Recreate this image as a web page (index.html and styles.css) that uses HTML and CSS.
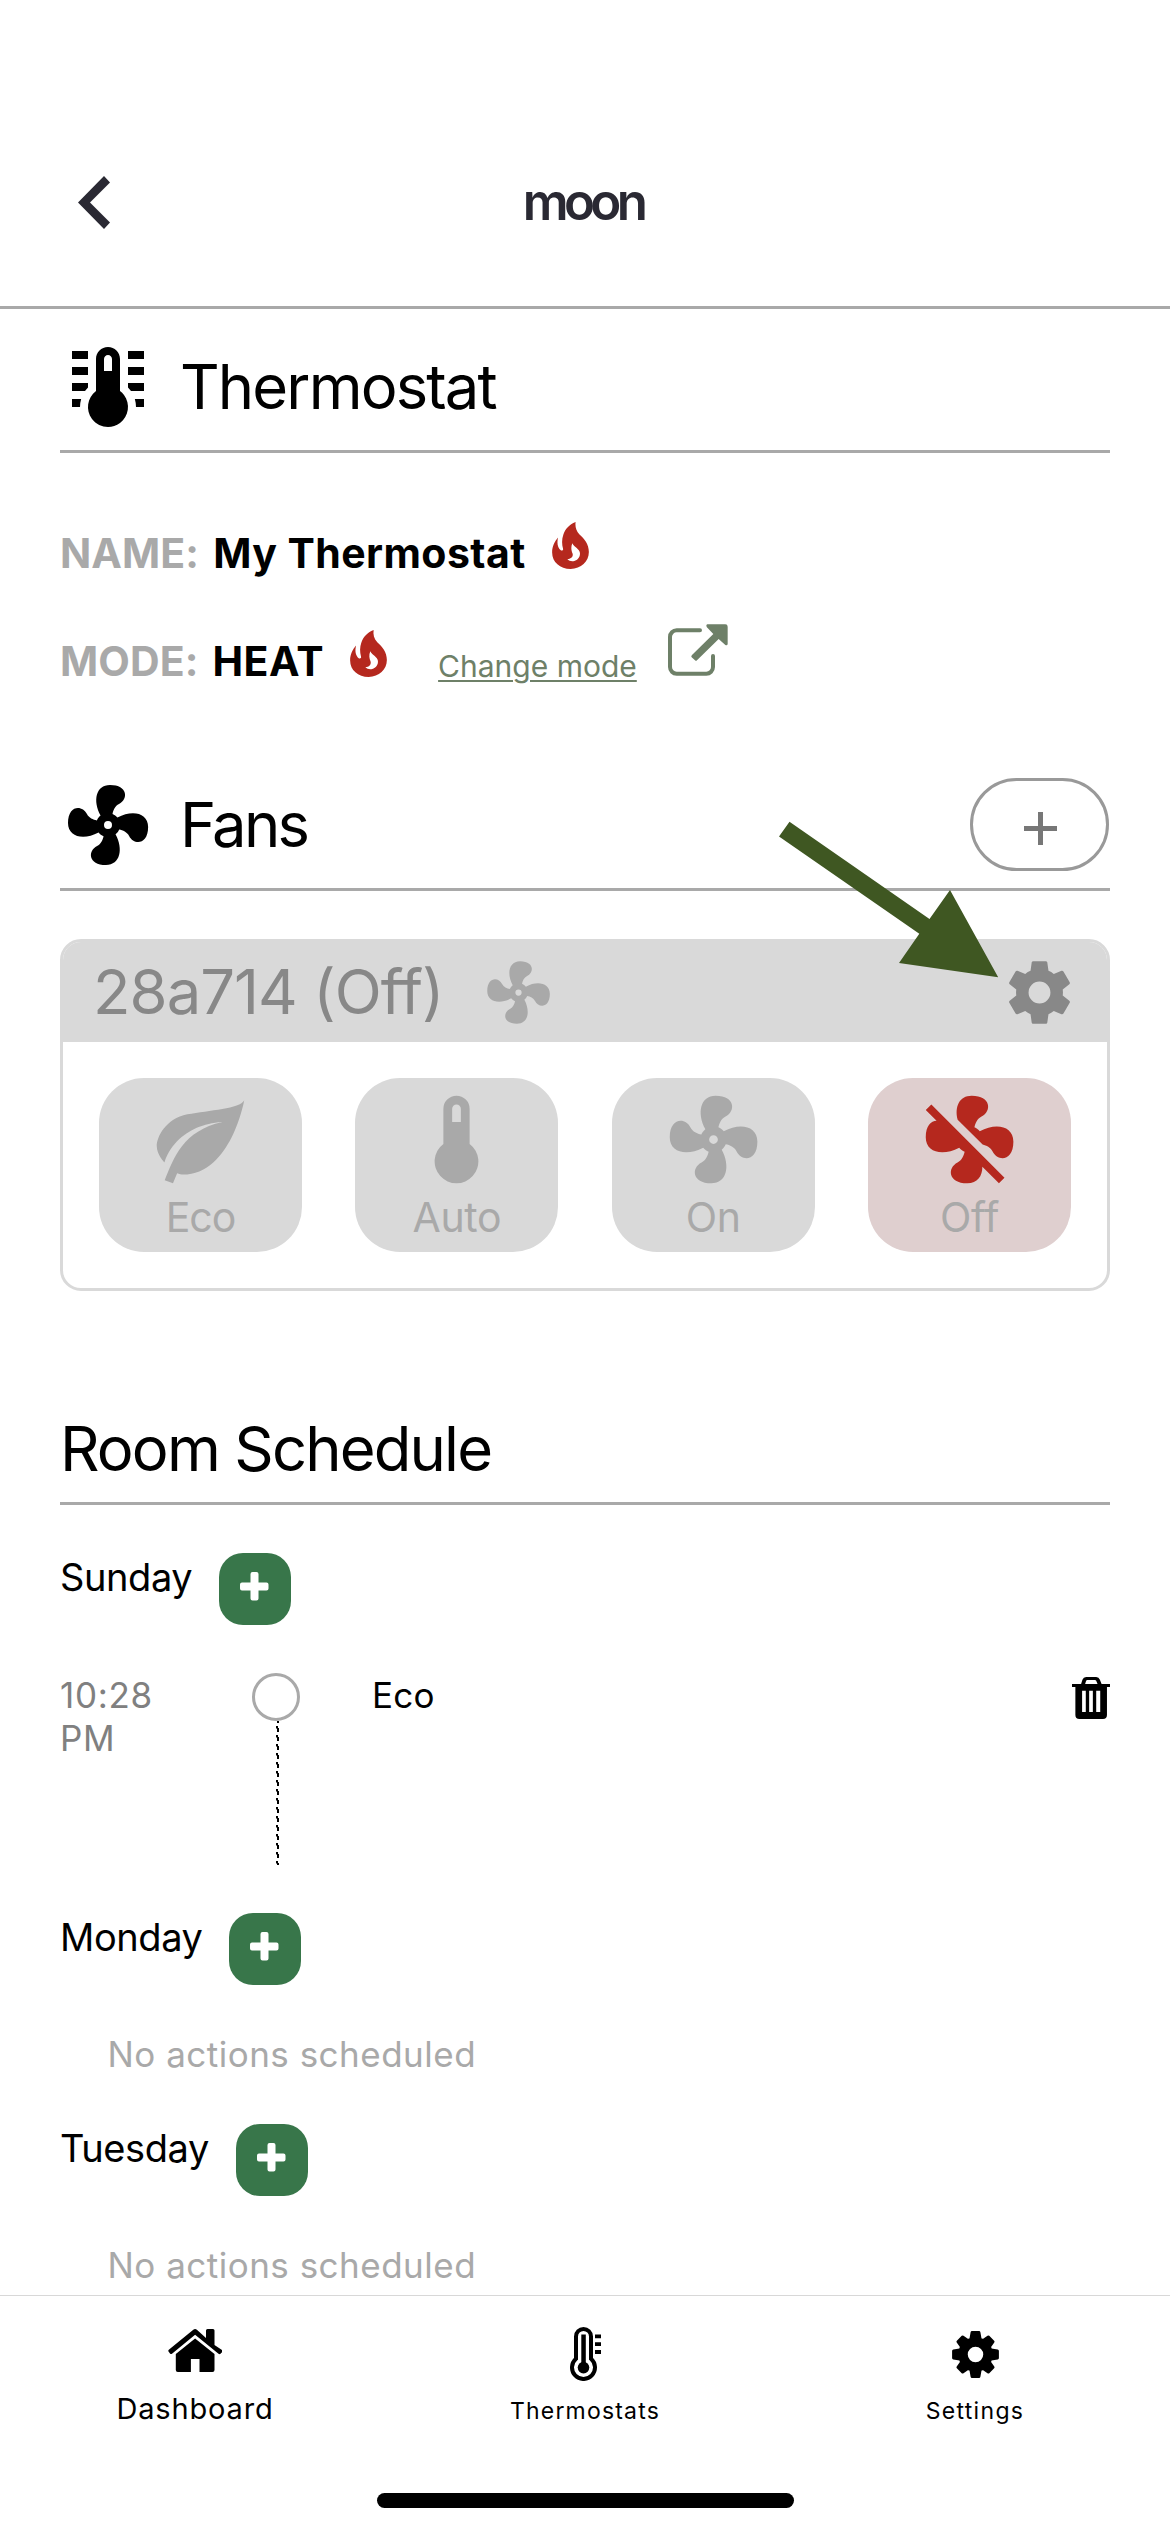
FILE: index.html
```
<!DOCTYPE html>
<html lang="en">
<head>
<meta charset="utf-8">
<title>moon</title>
<link rel="stylesheet" href="styles.css">
</head>
<body>
<svg class="defs" aria-hidden="true">
  <symbol id="fan" viewBox="0 0 24 24"><path d="M12,11A1,1 0 0,0 11,12A1,1 0 0,0 12,13A1,1 0 0,0 13,12A1,1 0 0,0 12,11M12.5,2C17,2 17.11,5.57 14.75,6.75C13.76,7.24 13.32,8.29 13.13,9.22C13.61,9.42 14.03,9.73 14.35,10.13C18.05,8.13 22.03,8.92 22.03,12.5C22.03,17 18.46,17.1 17.28,14.73C16.78,13.74 15.72,13.3 14.79,13.11C14.59,13.59 14.28,14 13.88,14.34C15.87,18.03 15.08,22 11.5,22C7,22 6.91,18.42 9.27,17.24C10.25,16.75 10.69,15.71 10.89,14.79C10.4,14.59 9.97,14.27 9.65,13.87C5.96,15.85 2,15.07 2,11.5C2,7 5.56,6.89 6.74,9.26C7.24,10.25 8.29,10.68 9.22,10.87C9.41,10.39 9.73,9.97 10.14,9.65C8.15,5.96 8.94,2 12.5,2Z"/></symbol>
  <symbol id="flame" viewBox="33 44 111 142"><path fill-rule="evenodd" d="M104 44C102 58 105 70 115 81C130 95 144 110 144 135C144 164 120 186 89 186C57 186 33 165 33 136C33 117 41 103 51 91C47 106 49 123 60 130C64 131 67 129 66 125C62 110 62 96 67 82C73 65 84 52 104 44ZM94 108C89 120 91 130 95 140C97 149 90 156 79 156C84 162 92 164 100 162C111 159 118 149 117 138C116 124 100 121 94 108Z"/></symbol>
  <symbol id="plus" viewBox="0 0 29 29"><path d="M12.5 0h4a2 2 0 0 1 2 2v8.500h8a2 2 0 0 1 2 2v4a2 2 0 0 1-2 2h-8v8a2 2 0 0 1-2 2h-4a2 2 0 0 1-2-2v-8h-8.500a2 2 0 0 1-2-2v-4a2 2 0 0 1 2-2h8.500v-8.500a2 2 0 0 1 2-2z"/></symbol>
</svg>

<header class="topbar">
  <svg class="back" viewBox="0 0 32 53"><path d="M26 0 0 26.500 26 53 32 46.500 12 26.500 32 6.500z"/></svg>
  <h1 class="topbar-title">moon</h1>
</header>

<main class="content">
  <section>
    <div class="head">
      <svg class="head-icon" viewBox="0 0 24 24"><path d="M17 3H21V5H17V3M17 7H21V9H17V7M17 11H21V13H17.750L17 12.100V11M21 15V17H19C19 16.310 18.900 15.630 18.710 15H21M7 3V5H3V3H7M7 7V9H3V7H7M7 11V12.100L6.250 13H3V11H7M3 15H5.290C5.100 15.630 5 16.310 5 17H3V15M15 13V5C15 3.340 13.660 2 12 2S9 3.340 9 5V13C6.790 14.660 6.340 17.790 8 20S12.790 22.660 15 21 17.660 16.210 16 14C15.720 13.620 15.380 13.280 15 13M12 4C12.550 4 13 4.450 13 5V8H11V5C11 4.450 11.450 4 12 4Z"/></svg>
      <h2 class="title title-thermostat">Thermostat</h2>
    </div>
    <div class="info">
      <div class="info-row">
        <span class="key">NAME:</span><span class="value">My Thermostat</span>
        <svg class="flame"><use href="#flame"/></svg>
      </div>
      <div class="info-row">
        <span class="key">MODE:</span><span class="value">HEAT</span>
        <svg class="flame"><use href="#flame"/></svg>
        <a class="change">Change mode</a>
        <svg class="external" viewBox="988 28 180 156"><path d="M1084 47H1014A20 20 0 0 0 994 67V157A20 20 0 0 0 1014 177H1103A20 20 0 0 0 1123 157V124" fill="none" stroke="currentColor" stroke-width="12" stroke-linecap="round"/><path d="M1106 29H1160Q1167 29 1167 36V88Q1166 94 1160 91L1140 73L1075 137Q1072 140 1069 137L1059 128Q1056 125 1060 121L1124 58L1104 37Q1101 30 1106 29Z"/></svg>
      </div>
    </div>
  </section>

  <section class="fans">
    <div class="head">
      <svg class="head-icon"><use href="#fan"/></svg>
      <h2 class="title title-fans">Fans</h2>
      <button class="add-fan"><svg class="add-fan-icon" viewBox="0 0 33 33"><path d="M14 0h5v14h14v5H19v14h-5V19H0v-5h14z"/></svg></button>
      <svg class="pointer" viewBox="0 0 220 157"><path d="M10.500 .7 150.500 98 171 69 219.200 156.300 120 142 140.300 112.700 0 15.500Z"/></svg>
    </div>
    <div class="card">
      <div class="card-head">
        <span class="card-title">28a714 (Off)</span>
        <svg class="card-fan"><use href="#fan"/></svg>
        <svg class="card-gear" viewBox="0 0 24 24"><path d="M12,15.500A3.500,3.500 0 0,1 8.500,12A3.500,3.500 0 0,1 12,8.500A3.500,3.500 0 0,1 15.500,12A3.500,3.500 0 0,1 12,15.500M19.430,12.970C19.470,12.650 19.500,12.330 19.500,12C19.500,11.670 19.470,11.340 19.430,11L21.540,9.370C21.730,9.220 21.780,8.950 21.660,8.730L19.660,5.270C19.540,5.050 19.270,4.960 19.050,5.050L16.560,6.050C16.040,5.660 15.500,5.320 14.870,5.070L14.500,2.420C14.460,2.180 14.250,2 14,2H10C9.750,2 9.540,2.180 9.500,2.420L9.130,5.070C8.500,5.320 7.960,5.660 7.440,6.050L4.950,5.050C4.730,4.960 4.460,5.050 4.340,5.270L2.340,8.730C2.210,8.950 2.270,9.220 2.460,9.370L4.570,11C4.530,11.340 4.500,11.670 4.500,12C4.500,12.330 4.530,12.650 4.570,12.970L2.460,14.630C2.270,14.780 2.210,15.050 2.340,15.270L4.340,18.730C4.460,18.950 4.730,19.030 4.950,18.950L7.440,17.940C7.960,18.340 8.500,18.680 9.130,18.930L9.500,21.580C9.540,21.820 9.750,22 10,22H14C14.250,22 14.460,21.820 14.500,21.580L14.870,18.930C15.500,18.670 16.040,18.340 16.560,17.940L19.050,18.950C19.270,19.030 19.540,18.950 19.660,18.730L21.660,15.270C21.780,15.050 21.730,14.780 21.540,14.630L19.430,12.970Z"/></svg>
      </div>
      <div class="modes">
        <button class="mode">
          <svg class="mode-icon" viewBox="0 0 24 24"><path d="M17,8C8,10 5.900,16.170 3.820,21.340L5.710,22L6.660,19.700C7.140,19.870 7.640,20 8,20C19,20 22,3 22,3C21,5 14,5.250 9,6.250C4,7.250 2,11.500 2,13.500C2,15.500 3.750,17.250 3.750,17.250C7,8 17,8 17,8Z"/></svg>
          <span class="mode-label mode-label-tight">Eco</span>
        </button>
        <button class="mode">
          <svg class="mode-icon" viewBox="0 0 24 24"><path d="M15 13V5A3 3 0 0 0 9 5V13A5 5 0 1 0 15 13M12 4A1 1 0 0 1 13 5V8H11V5A1 1 0 0 1 12 4Z"/></svg>
          <span class="mode-label">Auto</span>
        </button>
        <button class="mode">
          <svg class="mode-icon"><use href="#fan"/></svg>
          <span class="mode-label">On</span>
        </button>
        <button class="mode mode-off">
          <svg class="mode-icon" viewBox="0 0 24 24"><path d="M12.500,2C9.640,2 8.570,4.550 9.290,7.470L15,13.160C15.870,13.370 16.810,13.810 17.280,14.730C18.460,17.100 22.030,17 22.030,12.500C22.030,8.920 18.050,8.130 14.350,10.130C14.030,9.730 13.610,9.420 13.130,9.220C13.320,8.290 13.760,7.240 14.750,6.750C17.110,5.570 17,2 12.500,2M3.280,4L2,5.270L4.470,7.730C3.220,7.740 2,8.870 2,11.500C2,15.070 5.960,15.850 9.650,13.870C9.970,14.270 10.400,14.590 10.890,14.790C10.690,15.710 10.250,16.750 9.270,17.240C6.910,18.420 7,22 11.500,22C13.800,22 14.940,20.360 14.940,18.210L18.730,22L20,20.720L3.280,4Z"/></svg>
          <span class="mode-label">Off</span>
        </button>
      </div>
    </div>
  </section>

  <section class="schedule">
    <h2 class="title schedule-title">Room Schedule</h2>
    <div class="day">
      <span class="day-name">Sunday</span>
      <button class="add-action"><svg class="add-action-icon"><use href="#plus"/></svg></button>
    </div>
    <div class="event">
      <span class="event-time">10:28 PM</span>
      <div class="event-marker">
        <span class="event-dot"></span>
        <svg class="event-line" viewBox="0 0 3 144">
          <defs><pattern id="dash" width="3" height="9" patternUnits="userSpaceOnUse"><path d="M1 0H3V2H1zM0 5H2V7H3V9H1V7.500H0z"/></pattern></defs>
          <rect width="3" height="144" fill="url(#dash)"/>
        </svg>
      </div>
      <span class="event-name">Eco</span>
      <svg class="trash" viewBox="96 111 113 125"><path fill-rule="evenodd" d="M96 132H123L127 119Q130 111 138 111H168Q176 111 179 119L184 132H209V141H200V224Q200 236 188 236H118Q106 236 106 224V141H96ZM135 132H172L168 122Q167 120 164 120H142Q139 120 138 122ZM126 152V215H137V152ZM147 152V215H158V152ZM168 152V215H180V152Z"/></svg>
    </div>
    <div class="day">
      <span class="day-name">Monday</span>
      <button class="add-action"><svg class="add-action-icon"><use href="#plus"/></svg></button>
    </div>
    <p class="empty">No actions scheduled</p>
    <div class="day">
      <span class="day-name">Tuesday</span>
      <button class="add-action"><svg class="add-action-icon"><use href="#plus"/></svg></button>
    </div>
    <p class="empty">No actions scheduled</p>
  </section>
</main>

<nav class="tabs">
  <div class="tab-list">
    <a class="tab tab-active">
      <span class="tab-slot"><svg class="tab-home" viewBox="166.500 2329 54.500 43"><path d="M191.800 2329.700Q193.600 2328.300 195.400 2329.700L204.500 2338V2330.500Q204.500 2329 206 2329H211.500Q213 2329 213 2330.500V2345L220.500 2350Q221.500 2351 220.700 2352L219 2353.800Q218 2354.500 217 2353.700L193.600 2334.700 170.500 2353.700Q169.500 2354.500 168.500 2353.500L167 2351.500Q166.500 2350.500 167.300 2349.800Z"/><path d="M193.600 2338.500 213 2354V2370Q213 2372 211 2372H198V2359H189.400V2372H176.300Q174.300 2372 174.300 2370V2354Z"/></svg></span>
      <span class="tab-label">Dashboard</span>
    </a>
    <a class="tab">
      <span class="tab-slot"><svg class="tab-thermo" viewBox="0 0 31 54"><path d="M6 31.800V9.500a7.500 7.500 0 0 1 15 0V31.800A11.500 11.500 0 1 1 6 31.800Z" fill="none" stroke="#000" stroke-width="4"/><circle cx="13.500" cy="40.600" r="5.800"/><path d="M11.300 7.500h4.500V38h-4.500zM25 7.500h6v3.800h-6zM25 15.300h6v3.800h-6zM25 23h6v3.900h-6z"/></svg></span>
      <span class="tab-label">Thermostats</span>
    </a>
    <a class="tab">
      <span class="tab-slot"><svg class="tab-gear" viewBox="-23.500 -23.500 47 47">
        <defs><g id="teeth"><path id="tooth" d="M-6-16-4.900-22.200Q-4.700-23.400-3.500-23.400H3.500Q4.700-23.400 4.900-22.200L6-16Z"/><use href="#tooth" transform="rotate(90)"/><use href="#tooth" transform="rotate(180)"/><use href="#tooth" transform="rotate(270)"/></g></defs>
        <use href="#teeth"/><use href="#teeth" transform="rotate(45) scale(.98)"/>
        <circle r="12.500" fill="none" stroke="#000" stroke-width="9.500"/></svg></span>
      <span class="tab-label tab-label-wide">Settings</span>
    </a>
  </div>
  <div class="home-bar"></div>
</nav>
</body>
</html>
```
FILE: styles.css
```
* { box-sizing: border-box; }
body {
  margin: 0;
  width: 1170px;
  height: 2532px;
  display: flex;
  flex-direction: column;
  overflow: hidden;
  background: #fff;
  color: #000;
  font-family: Inter, "Liberation Sans", sans-serif;
}
svg { display: block; flex: none; fill: currentColor; }
h1, h2, p { margin: 0; font-weight: 400; }
button { border: 0; padding: 0; margin: 0; font: inherit; background: none; }
.defs { display: none; }

.topbar {
  flex: none;
  height: 309px;
  padding: 98px 77.500px 0;
  display: grid;
  grid-template-columns: 1fr auto 1fr;
  align-items: center;
  border-bottom: 3px solid #a9a9a9;
  color: #2a2933;
}
.back { width: 32px; height: 53px; }
.topbar-title { margin-right: 4px; font-size: 51px; line-height: 60px; font-weight: 600; letter-spacing: -4.700px; }

.content { flex: 1; min-height: 0; overflow: hidden; padding: 30px 60px 0; }
.head {
  position: relative;
  display: flex;
  align-items: center;
  gap: 24px;
  height: 114px;
  padding-bottom: 15px;
  border-bottom: 3px solid #a9a9a9;
}
.head-icon { width: 96px; height: 96px; }
.title { font-size: 61.500px; line-height: 96px; letter-spacing: -1.850px; }
.title-thermostat { letter-spacing: -1.850px; }
.title-fans { letter-spacing: -2.700px; }

.info { margin-top: 46px; }
.info-row { display: flex; align-items: center; height: 108px; font-size: 41px; font-weight: 700; letter-spacing: .430px; }
.key { color: #a9a9a9; margin-right: 14px; letter-spacing: .100px; }
.flame { width: 37px; height: 47px; margin: 0 0 15px 26px; color: #b5281e; }
.change {
  margin: 9px 0 0 51px;
  color: #6e8068;
  font-size: 30px;
  line-height: 40px;
  font-weight: 400;
  letter-spacing: 0;
  text-decoration: underline;
  text-decoration-thickness: 2px;
  text-underline-offset: 3px;
}
.external { width: 60px; height: 52px; margin: 0 0 22px 31px; color: #6e8068; }

.fans { margin-top: 62px; }
.add-fan {
  width: 139px;
  height: 93px;
  margin: 0 1px 2px auto;
  border: 3px solid #999;
  border-radius: 46.500px;
  display: flex;
  align-items: center;
  justify-content: center;
  padding: 9px 0 0 2px;
  color: #777;
}
.add-fan-icon { width: 33px; height: 33px; }
.pointer { position: absolute; left: 718.500px; top: 44px; width: 220px; height: 157px; color: #3f5722; z-index: 1; }

.card { margin-top: 48px; border: 3px solid #d9d9d9; border-radius: 21px; overflow: hidden; }
.card-head { display: flex; align-items: center; height: 100px; padding: 0 30px; background: #d9d9d9; }
.card-title { font-size: 61.500px; line-height: 98px; letter-spacing: -.960px; color: #888; }
.card-fan { width: 75px; height: 75px; margin-left: 38px; color: #a9a9a9; }
.card-gear { width: 75px; height: 75px; margin-left: auto; color: #888; }
.modes { display: flex; justify-content: space-between; padding: 36px; }
.mode {
  width: 203px;
  height: 174px;
  padding-top: 9px;
  border-radius: 45px;
  background: #d9d9d9;
  color: #a9a9a9;
  display: flex;
  flex-direction: column;
  align-items: center;
}
.mode-icon { width: 105px; height: 105px; }
.mode-label { font-size: 41px; line-height: 50px; letter-spacing: -.400px; }
.mode-label-tight { letter-spacing: -1.100px; }
.mode-off { background: #dfcfcf; }
.mode-off .mode-icon { color: #b5281e; }

.schedule { margin-top: 109px; }
.schedule-title { height: 105px; padding-top: 1px; border-bottom: 3px solid #a9a9a9; }
.day { display: flex; gap: 27px; margin-top: 48px; }
.day-name { font-size: 38px; line-height: 48px; letter-spacing: -.420px; }
.add-action {
  display: flex;
  align-items: flex-start;
  width: 72px;
  height: 72px;
  border-radius: 24px;
  background: #38764a;
  color: #fff;
  padding: 19px 0 0 21px;
}
.add-action-icon { width: 29px; height: 29px; }
.event { display: flex; height: 192px; margin-top: 48px; font-size: 35px; line-height: 42.500px; }
.event-time { width: 110px; margin-right: 82px; padding-top: 1px; color: #808080; letter-spacing: .700px; }
.event-marker { width: 48px; display: flex; flex-direction: column; align-items: center; }
.event-dot { width: 48px; height: 48px; border: 3px solid #a9a9a9; border-radius: 50%; }
.event-line { width: 3px; height: 144px; margin-left: 3px; }
.event-name { margin-left: 72px; padding-top: 1px; letter-spacing: .230px; }
.trash { width: 38px; height: 42px; margin: 4px 0 0 auto; }
.empty { margin: 48px 0 0 47.500px; font-size: 35px; line-height: 43px; letter-spacing: .490px; color: #a9a9a9; }

.tabs { flex: none; height: 237px; border-top: 1px solid #d8d8d8; background: #fff; }
.tab-list { display: grid; grid-template-columns: repeat(3, 1fr); height: 197px; padding-top: 31px; }
.tab { display: flex; flex-direction: column; align-items: center; font-size: 23px; line-height: 40px; letter-spacing: 1.190px; }
.tab-slot { height: 54px; margin-bottom: 10px; display: flex; align-items: center; }
.tab-active { font-size: 29px; line-height: 35px; letter-spacing: .850px; }
.tab-active .tab-slot { height: 47px; margin-bottom: 17px; }
.tab-home { width: 54.500px; height: 43px; }
.tab-thermo { width: 31px; height: 54px; }
.tab-gear { width: 47px; height: 47px; }
.tab-label-wide { letter-spacing: 1.300px; }
.home-bar { width: 417px; height: 15px; margin: 0 auto; border-radius: 7.500px; background: #000; }
```
